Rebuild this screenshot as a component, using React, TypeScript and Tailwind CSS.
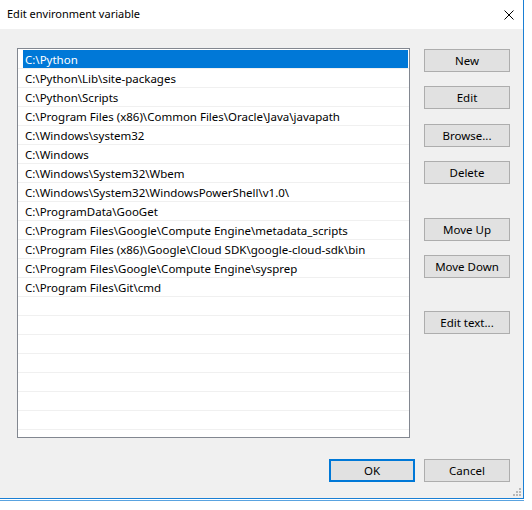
import React from 'react';

const PATHS = [
  'C:\\Python',
  'C:\\Python\\Lib\\site-packages',
  'C:\\Python\\Scripts',
  'C:\\Program Files (x86)\\Common Files\\Oracle\\Java\\javapath',
  'C:\\Windows\\system32',
  'C:\\Windows',
  'C:\\Windows\\System32\\Wbem',
  'C:\\Windows\\System32\\WindowsPowerShell\\v1.0\\',
  'C:\\ProgramData\\GooGet',
  'C:\\Program Files\\Google\\Compute Engine\\metadata_scripts',
  'C:\\Program Files (x86)\\Google\\Cloud SDK\\google-cloud-sdk\\bin',
  'C:\\Program Files\\Google\\Compute Engine\\sysprep',
  'C:\\Program Files\\Git\\cmd',
];

const TOTAL_ROWS = 21;

const font = { fontFamily: '"Noto Sans", "Open Sans", sans-serif' };

const WinButton = ({ label, className = '', isDefault = false }: { label: string; className?: string; isDefault?: boolean }) => (
  <button
    type="button"
    className={`w-[86px] h-[23px] bg-[#e1e1e1] text-[11.5px] leading-none text-black flex items-center justify-center ${
      isDefault ? 'border-2 border-[#0078d7]' : 'border border-[#adadad]'
    } ${className}`}
  >
    {label}
  </button>
);

// small dotted resize grip in the bottom right corner
const Grip = () => (
  <svg width="10" height="10" viewBox="0 0 10 10" className="absolute right-[2px] bottom-[2px]">
    {[
      [8, 0], [8, 3], [5, 3], [8, 6], [5, 6], [2, 6],
    ].map(([x, y], i) => (
      <rect key={i} x={x} y={y + 2} width="2" height="2" fill="#b8b8b8" />
    ))}
  </svg>
);

export default function App() {
  const rows = Array.from({ length: TOTAL_ROWS }, (_, i) => PATHS[i] ?? '');

  return (
    <div className="w-[532px] h-[510px] bg-white overflow-hidden" style={font}>
      <div className="relative w-[524px] h-[499px] flex flex-col border-r border-b border-[#1a7fd4]">
        {/* title bar */}
        <div className="h-[29px] bg-white flex items-center justify-between pl-[7px] pr-[9px]">
          <span className="text-[11px] text-black">Edit environment variable</span>
          <svg width="10" height="10" viewBox="0 0 10 10">
            <path d="M0.5 0.5L9.5 9.5M9.5 0.5L0.5 9.5" stroke="#000" strokeWidth="1" />
          </svg>
        </div>

        {/* body */}
        <div className="flex-1 bg-[#f0f0f0] flex flex-col pl-[17px] pt-[19px]">
          <div className="flex">
            <div className="w-[393px] h-[390px] bg-white border border-[#828790] pt-[1px] overflow-hidden">
              {rows.map((p, i) => (
                <div key={i} className="h-[19px] border-b border-[#f0f0f0] flex">
                  <div
                    className={`ml-[5px] mr-[1px] flex-1 h-[18px] pl-[2px] pt-[1px] text-[11.5px] leading-[17px] whitespace-nowrap ${
                      i === 0 ? 'bg-[#0078d7] text-white' : 'text-black'
                    }`}
                  >
                    {p}
                  </div>
                </div>
              ))}
            </div>

            <div className="ml-[14px] pt-[1px] flex flex-col">
              <WinButton label="New" />
              <WinButton label="Edit" className="mt-[14px]" />
              <WinButton label="Browse..." className="mt-[15px]" />
              <WinButton label="Delete" className="mt-[14px]" />
              <WinButton label="Move Up" className="mt-[34px]" />
              <WinButton label="Move Down" className="mt-[14px]" />
              <WinButton label="Edit text..." className="mt-[33px]" />
            </div>
          </div>

          <div className="flex justify-end pr-[13px] mt-[21px] gap-[9px]">
            <WinButton label="OK" isDefault />
            <WinButton label="Cancel" />
          </div>
        </div>
        <Grip />
      </div>
      <div className="w-[524px] h-px mt-px bg-[#5aa3e0]" />
    </div>
  );
}
